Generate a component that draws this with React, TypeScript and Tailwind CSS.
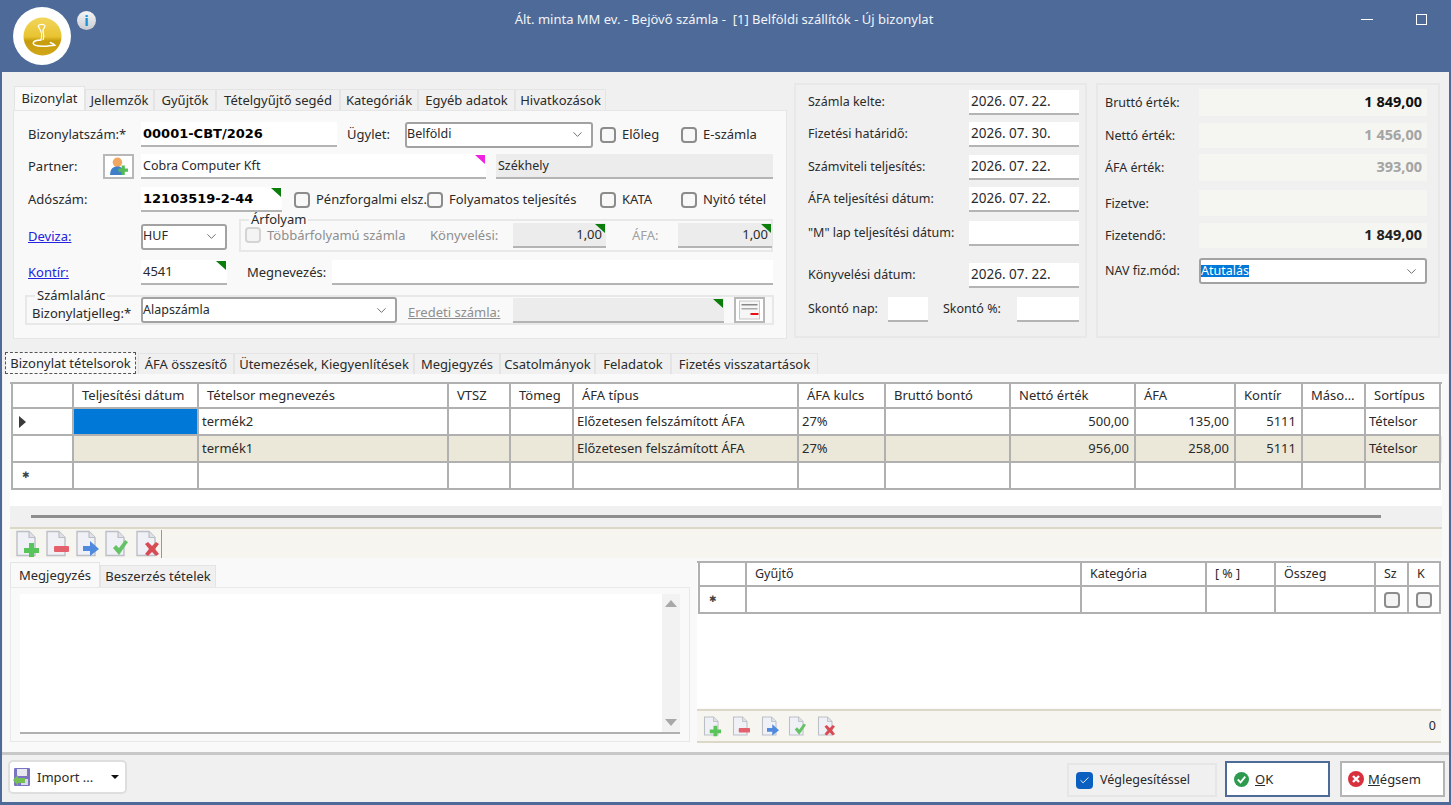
import type { ReactNode } from 'react';
import { ChevronDown, Check } from 'lucide-react';

const Tri = ({ color = 'border-t-[#0a7d0a]' }: { color?: string }) => (
  <span className={`absolute right-[1px] top-[1px] w-0 h-0 border-l-[10px] border-l-transparent border-t-[9px] ${color}`} />
);

function Field({ className = '', value, bold, right, gray, tri, tone }: {
  className?: string; value?: string; bold?: boolean; right?: boolean; gray?: boolean; tri?: boolean; tone?: string;
}) {
  return (
    <div className={`relative h-[25px] shrink-0 flex items-center pl-[2px] border-b-2 whitespace-nowrap ${gray ? 'bg-[#ececec] border-[#b4b4b4]' : 'bg-white border-[#b4b4b4]'} ${right ? 'justify-end pr-[4px]' : 'pr-[2px]'} ${className}`}>
      <span className={`${bold ? "font-bold font-['DejaVu_Sans'] text-[13px] text-black" : ''} ${tone ?? ''}`}>{value}</span>
      {tri && <Tri />}
    </div>
  );
}

function Combo({ className = '', value, selected }: { className?: string; value: string; selected?: boolean }) {
  return (
    <div className={`h-[26px] shrink-0 flex items-center justify-between pr-[6px] bg-white border-2 border-[#a2a2a2] rounded-[3px] text-[12.5px] ${className}`}>
      <span className={selected ? 'bg-[#0078d7] text-white' : ''}>{value}</span>
      <ChevronDown size={15} strokeWidth={1.5} className="text-[#666]" />
    </div>
  );
}

function Box({ label, className = '', disabled }: { label: string; className?: string; disabled?: boolean }) {
  return (
    <div className={`flex items-center shrink-0 whitespace-nowrap ${className}`}>
      <span className={`w-[16px] h-[16px] rounded-[4px] border-2 mr-[6px] ${disabled ? 'border-[#d4d4d4] bg-[#f4f4f4]' : 'border-[#8c8c8c] bg-[#f8f8f8]'}`} />
      <span className={disabled ? 'text-[#8e8e8e]' : ''}>{label}</span>
    </div>
  );
}

function Page({ children, className = '' }: { children: ReactNode; className?: string }) {
  return (
    <svg viewBox="0 0 24 27" className={`shrink-0 ${className}`}>
      <path d="M2 1.5h12l6 6v18H2z" fill="#eff1f6" stroke="#bcbfc6" strokeWidth="1.4" />
      <path d="M14 1.5v6h6" fill="#dfe1e6" stroke="#bcbfc6" strokeWidth="1.2" />
      {children}
    </svg>
  );
}

type IconKind = 'add' | 'del' | 'move' | 'ok' | 'x';

function DocIcon({ kind, className }: { kind: IconKind; className?: string }) {
  return (
    <Page className={className}>
      {kind === 'add' && <path d="M14 13h5v5h5v5h-5v4h-5v-4H9v-5h5z" fill="#58c45a" />}
      {kind === 'del' && <rect x="9" y="16" width="15" height="6" rx="1" fill="#e4606c" />}
      {kind === 'move' && <path d="M8 16h7v-5l9 8-9 7v-5H8z" fill="#4f8ade" />}
      {kind === 'ok' && <path d="M9 18l3-3 3 3 6-8 3 2-9 13z" fill="#66c266" />}
      {kind === 'x' && <path d="M10 14l3-2 4 4 4-4 3 2-4 5 4 5-3 2-4-4-4 4-3-2 4-5z" fill="#d84c56" />}
    </Page>
  );
}

function Tab({ label, active, className = '' }: { label: string; active?: boolean; className?: string }) {
  return (
    <div className={`flex items-center justify-center whitespace-nowrap shrink-0 border border-b-0 ${active ? 'h-[24px] bg-[#f9f9f9] border-[#e4e4e4]' : 'h-[21px] bg-[#f0f0f0] border-[#e4e4e4]'} ${className}`}>
      {label}
    </div>
  );
}

const mainRows = [
  { name: 'termék2', netto: '500,00', afa: '135,00', selected: true },
  { name: 'termék1', netto: '956,00', afa: '258,00', shaded: true },
];

const mainHead = ['', 'Teljesítési dátum', 'Tételsor megnevezés', 'VTSZ', 'Tömeg', 'ÁFA típus', 'ÁFA kulcs', 'Bruttó bontó', 'Nettó érték', 'ÁFA', 'Kontír', 'Máso…', 'Sortípus'];
const mainCols = 'grid grid-cols-[63px_125px_250px_62px_63px_225px_87px_125px_125px_100px_67px_63px_75px]';
const cell = 'border-r-2 border-b-2 border-[#b0b0b0] flex items-center px-[3px] whitespace-nowrap overflow-hidden first:border-l-2';

const subHead = ['', 'Gyűjtő', 'Kategória', '[ % ]', 'Összeg', 'Sz', 'K'];
const subCols = 'grid grid-cols-[49px_335px_125px_69px_100px_33px_32px]';

const NewRowMark = () => <span className="font-['DejaVu_Sans'] text-[9px] text-[#444]">✱</span>;

function App() {
  return (
    <div className="w-[1451px] h-[805px] overflow-hidden bg-[#4d6a99] flex flex-col text-[13px] leading-none text-[#2a2a2a] font-['Noto_Sans',sans-serif] relative">
      {/* title bar */}
      <div className="h-[72px] shrink-0 flex items-start text-[#f2f4f8] relative">
        <div className="absolute left-[13px] top-[7px] w-[58px] h-[58px] rounded-full bg-white flex items-center justify-center">
          <svg viewBox="0 0 40 40" className="w-[39px] h-[39px]">
            <defs>
              <linearGradient id="gold" x1="0" y1="0" x2="0" y2="1">
                <stop offset="0" stopColor="#f2d65a" />
                <stop offset="0.5" stopColor="#e8c432" />
                <stop offset="0.62" stopColor="#c79c0c" />
                <stop offset="1" stopColor="#d2a818" />
              </linearGradient>
            </defs>
            <circle cx="20" cy="20" r="19.5" fill="url(#gold)" />
            <path d="M15.5 9c2-2 6-2 7 0 .5 2-2 2.5-2 4.5 0 3 2 6 0 10" fill="none" stroke="#fff" strokeWidth="1.3" />
            <path d="M15.5 9c1 3 3 4.5 3.5 8 .4 3 0 5-.8 6.5" fill="none" stroke="#fff" strokeWidth="1.1" />
            <path d="M19 23.5c-5 0-8.500 1.500-8.500 3.500s5 3 10 3 8-1 12-1c-1-1.500-3-2-5-3" fill="none" stroke="#fff" strokeWidth="1.6" />
          </svg>
        </div>
        <div className="absolute left-[77px] top-[11px] w-[19px] h-[19px] rounded-full bg-gradient-to-b from-[#f6f6f6] to-[#c8ccd2] flex items-center justify-center">
          <span className="text-[15px] font-bold text-[#1c8fd8]">i</span>
        </div>
        <div className="w-full text-center pt-[13px] pr-[3px] whitespace-pre">Ált. minta MM ev. - Bejövő számla -  [1] Belföldi szállítók - Új bizonylat</div>
        <div className="absolute right-[78px] top-[19px] w-[12px] h-[1px] bg-white" />
        <div className="absolute right-[24px] top-[14px] w-[11px] h-[11px] border border-white" />
      </div>

      <div className="flex-1 ml-[2px] mr-[2px] mb-[3px] bg-[#f0f0f0] flex flex-col min-h-0">
        {/* header forms */}
        <div className="h-[278px] shrink-0 flex">
          <div className="ml-[11px] w-[774px] shrink-0">
            <div className="mt-[15px] h-[23px] flex items-end ml-[1px]">
              <Tab label="Bizonylat" active className="w-[71px]" />
              <Tab label="Jellemzők" className="w-[69px]" />
              <Tab label="Gyűjtők" className="w-[62px]" />
              <Tab label="Tételgyűjtő segéd" className="w-[124px]" />
              <Tab label="Kategóriák" className="w-[78px]" />
              <Tab label="Egyéb adatok" className="w-[97px]" />
              <Tab label="Hivatkozások" className="w-[91px]" />
            </div>
            <div className="h-[229px] bg-[#f9f9f9] border border-[#e6e6e6] pt-[11px] relative">
              <div className="flex items-center h-[25px]">
                <span className="ml-[14px] w-[113px] shrink-0">Bizonylatszám:*</span>
                <Field className="w-[196px]" value="00001-CBT/2026" bold />
                <span className="ml-[10px] w-[58px] shrink-0">Ügylet:</span>
                <Combo className="w-[188px]" value="Belföldi" />
                <Box label="Előleg" className="ml-[7px] w-[81px]" />
                <Box label="E-számla" />
              </div>
              <div className="flex items-center h-[25px] mt-[7px]">
                <span className="ml-[14px] w-[75px] shrink-0">Partner:</span>
                <div className="w-[31px] h-[25px] mr-[7px] shrink-0 bg-white border-2 border-[#b8b8b8] flex items-center justify-center">
                  <svg viewBox="0 0 20 20" className="w-[21px] h-[21px]">
                    <circle cx="9" cy="6" r="4.5" fill="#f0a860" />
                    <path d="M2 18c0-6 3-8 7-8s6 2 6 8z" fill="#3f7fc8" />
                    <path d="M13 9h3v3h3v3h-3v3h-3v-3h-3v-3h3z" fill="#55bb55" />
                  </svg>
                </div>
                <Field className="w-[345px]" value="Cobra Computer Kft" tone="text-[12.5px] pt-[2px]" />
                <div className="w-0 relative"><span className="absolute right-[1px] -top-[12px] w-0 h-0 border-l-[10px] border-l-transparent border-t-[9px] border-t-[#f020e0]" /></div>
                <Field className="ml-[10px] w-[277px]" value="Székhely" gray tone="text-[12.5px] pt-[2px]" />
              </div>
              <div className="flex items-center h-[25px] mt-[8px]">
                <span className="ml-[14px] w-[113px] shrink-0">Adószám:</span>
                <Field className="w-[141px]" value="12103519-2-44" bold tri />
                <Box label="Pénzforgalmi elsz." className="ml-[12px] w-[133px]" />
                <Box label="Folyamatos teljesítés" className="w-[173px]" />
                <Box label="KATA" className="w-[81px]" />
                <Box label="Nyitó tétel" />
              </div>
              <div className="flex items-center h-[25px] mt-[12px] relative">
                <span className="ml-[14px] w-[113px] shrink-0 text-[#2323e0] underline">Deviza:</span>
                <Combo className="w-[86px]" value="HUF" />
                <div className="ml-[12px] w-[534px] h-[33px] -mt-[3px] border-2 border-[#e8e8e8] flex items-center relative shrink-0">
                  <span className="absolute left-[8px] -top-[8px] bg-[#f9f9f9] px-[2px]">Árfolyam</span>
                  <Box label="Többárfolyamú számla" disabled className="ml-[4px] w-[185px]" />
                  <span className="w-[83px] shrink-0 text-[#8e8e8e]">Könyvelési:</span>
                  <Field className="w-[93px]" value="1,00" right gray tri />
                  <span className="ml-[26px] w-[46px] shrink-0 text-[#a0a0a0]">ÁFA:</span>
                  <Field className="w-[94px]" value="1,00" right gray tri />
                </div>
              </div>
              <div className="flex items-center h-[25px] mt-[11px]">
                <span className="ml-[14px] w-[113px] shrink-0 text-[#2323e0] underline">Kontír:</span>
                <Field className="w-[86px]" value="4541" tri />
                <span className="ml-[20px] w-[85px] shrink-0">Megnevezés:</span>
                <Field className="w-[441px]" />
              </div>
              <div className="ml-[11px] w-[749px] h-[30px] mt-[10px] border-2 border-[#e8e8e8] flex items-center relative">
                <span className="absolute left-[8px] -top-[8px] bg-[#f9f9f9] px-[2px]">Számlalánc</span>
                <span className="ml-[5px] w-[109px] shrink-0 pt-[6px]">Bizonylatjelleg:*</span>
                <Combo className="w-[256px]" value="Alapszámla" />
                <span className="ml-[11px] w-[105px] shrink-0 text-[#8e8e8e] underline pt-[5px]">Eredeti számla:</span>
                <Field className="w-[211px]" gray tri />
                <div className="ml-[10px] w-[31px] h-[26px] bg-white border-2 border-[#b8b8b8] flex items-center justify-center shrink-0">
                  <svg viewBox="0 0 22 20" className="w-[23px] h-[20px]">
                    <rect x="1" y="1" width="20" height="18" fill="#f6f6f6" stroke="#c8c8c8" />
                    <rect x="3" y="4" width="16" height="1.5" fill="#888" />
                    <rect x="3" y="8" width="16" height="1.5" fill="#aaa" />
                    <rect x="12" y="13" width="8" height="2" fill="#e81010" />
                  </svg>
                </div>
              </div>
            </div>
          </div>

          <div className="ml-[7px] mt-[11px] w-[293px] h-[255px] shrink-0 bg-[#f0f0f0] border-2 border-[#e8e8e8] pl-[12px] pt-[5px] text-[12.5px]">
            {[
              ['Számla kelte:', '2026. 07. 22.', 'mt-0'],
              ['Fizetési határidő:', '2026. 07. 30.', 'mt-[7px]'],
              ['Számviteli teljesítés:', '2026. 07. 22.', 'mt-[8px]'],
              ['ÁFA teljesítési dátum:', '2026. 07. 22.', 'mt-[7px]'],
              ['"M" lap teljesítési dátum:', '', 'mt-[9px]'],
              ['Könyvelési dátum:', '2026. 07. 22.', 'mt-[17px]'],
            ].map(([label, date, gap]) => (
              <div key={label} className={`flex items-center h-[25px] ${gap}`}>
                <span className="w-[161px] shrink-0 whitespace-nowrap pb-[1px]">{label}</span>
                <Field className="w-[110px]" value={date} tone="text-[13.5px]" />
              </div>
            ))}
            <div className="flex items-center h-[25px] mt-[9px]">
              <span className="w-[80px] shrink-0 whitespace-nowrap">Skontó nap:</span>
              <Field className="w-[40px]" />
              <span className="ml-[15px] w-[74px] shrink-0 whitespace-nowrap">Skontó %:</span>
              <Field className="w-[62px]" />
            </div>
          </div>

          <div className="ml-[9px] mt-[11px] w-[344px] h-[255px] shrink-0 border-2 border-[#e8e8e8] pl-[7px] pt-[4px] text-[12.5px]">
            {[
              ['Bruttó érték:', '1 849,00', 'font-bold text-[#111]', 'h-[27px]', 'mt-0'],
              ['Nettó érték:', '1 456,00', 'font-bold text-[#a4a4a4]', 'h-[25px]', 'mt-[7px]'],
              ['ÁFA érték:', '393,00', 'font-bold text-[#a4a4a4]', 'h-[27px]', 'mt-[6px]'],
              ['Fizetve:', '', '', 'h-[26px]', 'mt-[9px]'],
              ['Fizetendő:', '1 849,00', 'font-bold text-[#222]', 'h-[25px]', 'mt-[7px]'],
            ].map(([label, value, tone, h, gap]) => (
              <div key={label} className={`flex items-center ${h} ${gap}`}>
                <span className="w-[94px] shrink-0 pt-[2px]">{label}</span>
                <div className={`w-[228px] h-full bg-[#f5f5f1] flex items-center justify-end pr-[5px] pb-[2px] text-[14.5px] ${tone}`}>{value}</div>
              </div>
            ))}
            <div className="flex items-center mt-[10px]">
              <span className="w-[94px] shrink-0">NAV fiz.mód:</span>
              <Combo className="w-[228px]" value="Átutalás" selected />
            </div>
          </div>
        </div>

        {/* item tabs */}
        <div className="h-[24px] shrink-0 flex items-end ml-[3px]">
          <Tab label="Bizonylat tételsorok" active className="w-[131px] !h-[22px] !border !border-dashed !border-[#555]" />
          <Tab label="ÁFA összesítő" className="ml-[2px] w-[96px]" />
          <Tab label="Ütemezések, Kiegyenlítések" className="w-[180px]" />
          <Tab label="Megjegyzés" className="w-[86px]" />
          <Tab label="Csatolmányok" className="w-[95px]" />
          <Tab label="Feladatok" className="w-[76px]" />
          <Tab label="Fizetés visszatartások" className="w-[147px]" />
        </div>

        {/* item area */}
        <div className="h-[378px] shrink-0 mx-[1px] bg-[#f9f9f9] pt-[8px] flex flex-col pl-[7px] pr-[6px]">
          <div className="h-[124px] shrink-0 bg-white border-t-2 border-[#b0b0b0] pl-[1px]">
            <div className={`${mainCols} h-[25px]`}>
              {mainHead.map((h, i) => (
                <div key={i} className={`${cell} pl-[8px]`}>{h}</div>
              ))}
            </div>
            {mainRows.map((r) => (
              <div key={r.name} className={`${mainCols} h-[27px] ${r.shaded ? 'bg-[#ebe7d9]' : ''}`}>
                <div className={`${cell} bg-white pl-[6px]`}>
                  {r.selected && <span className="w-0 h-0 border-y-[6px] border-y-transparent border-l-[7px] border-l-[#3a3a3a]" />}
                </div>
                <div className={`${cell} ${r.selected ? 'bg-[#0078d7]' : ''}`} />
                <div className={cell}>{r.name}</div>
                <div className={cell} />
                <div className={cell} />
                <div className={cell}>Előzetesen felszámított ÁFA</div>
                <div className={cell}>27%</div>
                <div className={cell} />
                <div className={`${cell} justify-end !pr-[5px]`}>{r.netto}</div>
                <div className={`${cell} justify-end !pr-[5px]`}>{r.afa}</div>
                <div className={`${cell} justify-end !pr-[5px]`}>5111</div>
                <div className={cell} />
                <div className={cell}>Tételsor</div>
              </div>
            ))}
            <div className={`${mainCols} h-[27px]`}>
              {mainHead.map((_, i) => (
                <div key={i} className={`${cell} ${i === 0 ? 'pl-[9px]' : ''}`}>{i === 0 && <NewRowMark />}</div>
              ))}
            </div>
          </div>
          <div className="h-[21px] shrink-0 bg-[#f0f0f0] flex items-center pl-[21px]">
            <div className="w-[1350px] h-[3px] bg-[#8e8e8e]" />
          </div>
          <div className="h-[31px] shrink-0 bg-[#f6f5f0] border-t-2 border-[#dcd8c8] flex items-center pl-[5px]">
            <DocIcon kind="add" className="w-[24px] h-[27px]" />
            <DocIcon kind="del" className="ml-[6px] w-[24px] h-[27px]" />
            <DocIcon kind="move" className="ml-[6px] w-[24px] h-[27px]" />
            <DocIcon kind="ok" className="ml-[5px] w-[24px] h-[27px]" />
            <DocIcon kind="x" className="ml-[7px] w-[24px] h-[27px]" />
            <div className="ml-[2px] w-[1px] h-[28px] bg-[#999]" />
          </div>
          <div className="flex mt-[3px]">
            <div className="w-[680px] shrink-0">
              <div className="h-[26px] flex items-end">
                <Tab label="Megjegyzés" active className="w-[90px] !h-[25px]" />
                <Tab label="Beszerzés tételek" className="w-[116px] !h-[22px]" />
              </div>
              <div className="h-[155px] border border-[#e8e8e8] bg-[#f9f9f9] pt-[6px] px-[9px]">
                <div className="h-[140px] bg-white border-b-2 border-[#b0b0b0] flex justify-end">
                  <div className="w-[18px] bg-[#f2f2f2] flex flex-col justify-between items-center py-[6px]">
                    <span className="w-0 h-0 border-x-[6px] border-x-transparent border-b-[7px] border-b-[#a8a8a8]" />
                    <span className="w-0 h-0 border-x-[6px] border-x-transparent border-t-[7px] border-t-[#a8a8a8]" />
                  </div>
                </div>
              </div>
            </div>
            <div className="ml-[7px] w-[744px] shrink-0 text-[12.5px]">
              <div className="h-[147px] bg-white border-t-2 border-[#b0b0b0] pl-[1px]">
                <div className={`${subCols} h-[24px]`}>
                  {subHead.map((h, i) => (
                    <div key={i} className={`${cell} pl-[8px]`}>{h}</div>
                  ))}
                </div>
                <div className={`${subCols} h-[27px]`}>
                  {subHead.map((_, i) => (
                    <div key={i} className={`${cell} ${i === 0 ? 'pl-[9px]' : ''} ${i > 4 ? 'justify-center' : ''}`}>
                      {i === 0 && <NewRowMark />}
                      {i > 4 && <span className="w-[16px] h-[16px] rounded-[4px] border-2 border-[#8c8c8c] bg-[#f4f4f4]" />}
                    </div>
                  ))}
                </div>
              </div>
              <div className="h-[34px] mt-[1px] bg-[#f6f5f0] border-y-2 border-[#dcd8c8] flex items-center pl-[6px] pr-[5px]">
                <DocIcon kind="add" className="w-[18px] h-[22px]" />
                <DocIcon kind="del" className="ml-[11px] w-[18px] h-[22px]" />
                <DocIcon kind="move" className="ml-[11px] w-[18px] h-[22px]" />
                <DocIcon kind="ok" className="ml-[9px] w-[18px] h-[22px]" />
                <DocIcon kind="x" className="ml-[11px] w-[18px] h-[22px]" />
                <span className="ml-auto">0</span>
              </div>
            </div>
          </div>
        </div>

        {/* footer */}
        <div className="flex-1 border-t-[3px] border-[#c8c8c8] flex items-start">
          <div className="ml-[6px] mt-[5px] w-[119px] h-[34px] bg-white border-2 border-[#dedede] rounded-[5px] flex items-center pl-[2px] pr-[6px]">
            <svg viewBox="0 0 20 20" className="w-[20px] h-[20px] shrink-0">
              <rect x="2" y="1" width="16" height="18" rx="1" fill="#7a74c4" />
              <rect x="5" y="2" width="10" height="7" fill="#e8e8f0" />
              <rect x="9" y="12" width="7" height="6" fill="#d8d8e8" />
              <path d="M1 13l5-5v3h7v5H6v3z" fill="#74c054" />
            </svg>
            <span className="ml-[5px]">Import ...</span>
            <span className="ml-auto w-0 h-0 border-x-[4px] border-x-transparent border-t-[4px] border-t-[#111]" />
          </div>
          <div className="ml-auto mt-[8px] w-[150px] h-[34px] border-2 border-[#e6e6e6] flex items-center pl-[7px] text-[12.5px]">
            <span className="w-[17px] h-[17px] rounded-[4px] bg-[#0b5fc0] flex items-center justify-center">
              <Check size={11} strokeWidth={2} className="text-white" />
            </span>
            <span className="ml-[7px]">Véglegesítéssel</span>
          </div>
          <div className="ml-[8px] mt-[6px] w-[105px] h-[36px] bg-white border-2 border-[#4d6a99] flex items-center pl-[7px]">
            <svg viewBox="0 0 16 16" className="w-[15px] h-[15px]">
              <circle cx="8" cy="8" r="8" fill="#2e9a4e" />
              <path d="M4 8l3 3 5-6" fill="none" stroke="#fff" strokeWidth="2" />
            </svg>
            <span className="ml-[6px]"><u>O</u>K</span>
          </div>
          <div className="ml-[10px] mr-[4px] mt-[6px] w-[105px] h-[36px] bg-white border-2 border-[#b4b4b4] flex items-center pl-[6px]">
            <svg viewBox="0 0 16 16" className="w-[16px] h-[16px]">
              <circle cx="8" cy="8" r="8" fill="#d8303c" />
              <path d="M5 5l6 6M11 5l-6 6" fill="none" stroke="#fff" strokeWidth="2.4" />
            </svg>
            <span className="ml-[4px]"><u>M</u>égsem</span>
          </div>
        </div>
      </div>
    </div>
  );
}

export default App;
